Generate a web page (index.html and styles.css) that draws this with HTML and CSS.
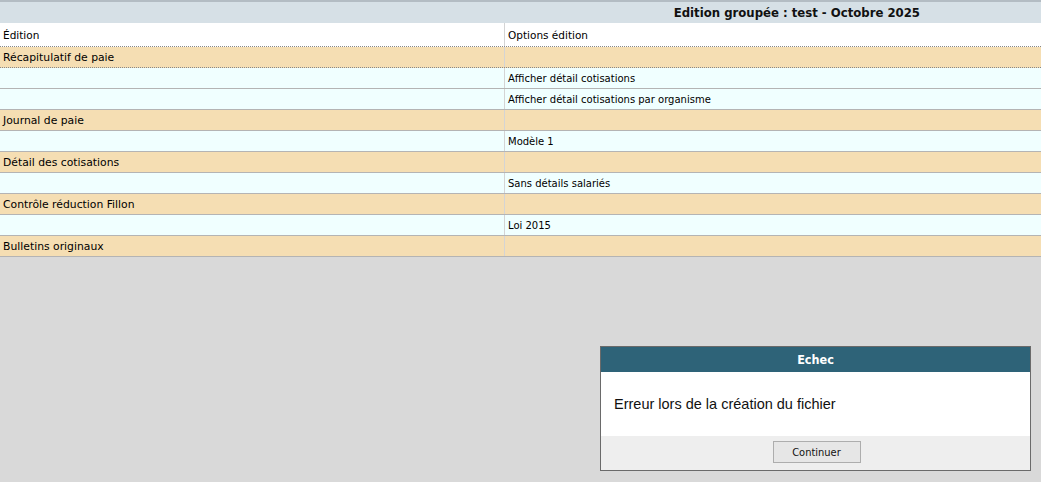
FILE: index.html
```html
<!DOCTYPE html>
<html lang="fr">
<head>
<meta charset="utf-8">
<title>Edition groupée</title>
<link rel="stylesheet" href="styles.css">
</head>
<body>
<div class="page">
  <div class="titlebar"><span class="title">Edition groupée : test - Octobre 2025</span></div>
  <div class="table">
    <div class="row head"><div class="c1">Édition</div><div class="c2">Options édition</div></div>
    <div class="row grp first"><div class="c1">Récapitulatif de paie</div><div class="c2"></div></div>
    <div class="row opt"><div class="c1"></div><div class="c2">Afficher détail cotisations</div></div>
    <div class="row opt"><div class="c1"></div><div class="c2">Afficher détail cotisations par organisme</div></div>
    <div class="row grp"><div class="c1">Journal de paie</div><div class="c2"></div></div>
    <div class="row opt"><div class="c1"></div><div class="c2">Modèle 1</div></div>
    <div class="row grp"><div class="c1">Détail des cotisations</div><div class="c2"></div></div>
    <div class="row opt"><div class="c1"></div><div class="c2">Sans détails salariés</div></div>
    <div class="row grp"><div class="c1">Contrôle réduction Fillon</div><div class="c2"></div></div>
    <div class="row opt"><div class="c1"></div><div class="c2">Loi 2015</div></div>
    <div class="row grp"><div class="c1">Bulletins originaux</div><div class="c2"></div></div>
  </div>
  <div class="dialog">
    <div class="dlg-head">Echec</div>
    <div class="dlg-body">Erreur lors de la création du fichier</div>
    <div class="dlg-foot"><button class="btn">Continuer</button></div>
  </div>
</div>
</body>
</html>
```
FILE: styles.css
```css
html, body {
  margin: 0;
  padding: 0;
  background: #d9d9d9;
  width: 1041px;
  height: 482px;
  overflow: hidden;
}
.page {
  position: relative;
  width: 1041px;
  height: 482px;
  font-family: "DejaVu Sans", sans-serif;
  font-size: 10px;
  color: #000;
}
.titlebar {
  height: 21px;
  border-top: 2px solid #b3bcc3;
  background: #d6e0e6;
  display: flex;
  align-items: center;
  justify-content: flex-end;
  padding-right: 121px;
}
.title {
  font-family: "DejaVu Sans Condensed", "DejaVu Sans", sans-serif;
  font-weight: bold;
  font-size: 13px;
  color: #111;
}
.row {
  display: grid;
  grid-template-columns: 504px 1fr;
  height: 20px;
  border-bottom: 1px solid #b4b4b4;
}
.row > div {
  display: flex;
  align-items: center;
  padding-left: 3px;
  white-space: nowrap;
}
.row .c2 {
  border-left: 1px solid #d4d4d4;
  padding-left: 3px;
}
.head {
  background: #fff;
  height: 23px;
  border-bottom: 1px dotted #888;
  font-size: 10.5px;
}
.grp {
  background: #f5deb3;
}
.grp .c1 {
  font-size: 10.8px;
}
.grp.first {
  border-bottom: 1px dotted #888;
}
.opt {
  background: #f0ffff;
}
.dialog {
  position: absolute;
  left: 600px;
  top: 346px;
  width: 429px;
  border: 1px solid #6a6a6a;
  background: #fff;
}
.dlg-head {
  height: 25px;
  background: #2e6378;
  color: #fff;
  font-family: "DejaVu Sans Condensed", "DejaVu Sans", sans-serif;
  font-weight: bold;
  font-size: 12.5px;
  display: flex;
  align-items: center;
  justify-content: center;
}
.dlg-body {
  height: 64px;
  display: flex;
  align-items: center;
  padding-left: 13px;
  font-family: "Liberation Sans", Arial, sans-serif;
  font-size: 14.5px;
  color: #111;
}
.dlg-foot {
  height: 34px;
  background: #eeeeee;
  display: flex;
  justify-content: center;
  align-items: flex-start;
  padding-top: 5px;
  box-sizing: border-box;
}
.btn {
  width: 88px;
  height: 22px;
  background: #e6e6e6;
  border: 1px solid #adadad;
  font-family: "DejaVu Sans Condensed", "DejaVu Sans", sans-serif;
  font-size: 11px;
  color: #111;
  padding: 0;
  margin-left: 2px;
}
```
